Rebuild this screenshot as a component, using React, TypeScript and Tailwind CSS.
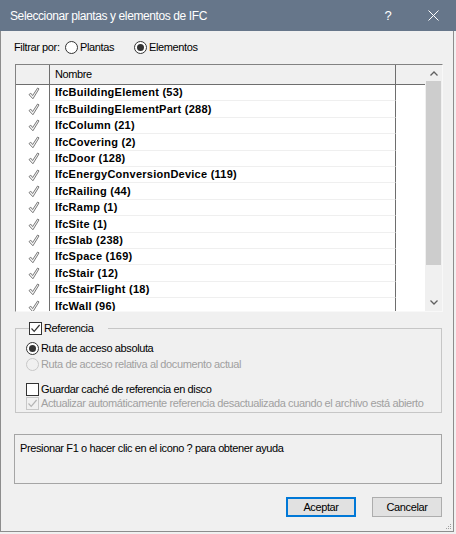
import React from "react"

const items = [
  "IfcBuildingElement (53)",
  "IfcBuildingElementPart (288)",
  "IfcColumn (21)",
  "IfcCovering (2)",
  "IfcDoor (128)",
  "IfcEnergyConversionDevice (119)",
  "IfcRailing (44)",
  "IfcRamp (1)",
  "IfcSite (1)",
  "IfcSlab (238)",
  "IfcSpace (169)",
  "IfcStair (12)",
  "IfcStairFlight (18)",
  "IfcWall (96)",
]

function RowCheck() {
  return (
    <svg width="12" height="13" viewBox="0 0 12 13">
      <path
        d="M1 7.6 L2.8 6.2 L4.6 8.6 L9.6 1 L11 1.9 L4.9 11.8 Z"
        fill="#f4f4f4"
        stroke="#7c7c7c"
        strokeWidth="1"
        strokeLinejoin="round"
      />
    </svg>
  )
}

function Radio({ checked, disabled }: { checked?: boolean; disabled?: boolean }) {
  return (
    <span
      className={
        disabled
          ? "w-[13px] h-[13px] rounded-full border border-[#c8c8c8] bg-[#f0f0f0] flex items-center justify-center shrink-0"
          : "w-[13px] h-[13px] rounded-full border border-[#333333] bg-white flex items-center justify-center shrink-0"
      }
    >
      {checked && <span className="w-[7px] h-[7px] rounded-full bg-[#333333]" />}
    </span>
  )
}

function Checkbox({ checked, disabled }: { checked?: boolean; disabled?: boolean }) {
  return (
    <span
      className={
        disabled
          ? "w-[13px] h-[13px] border border-[#c8c8c8] bg-[#f0f0f0] flex items-center justify-center shrink-0"
          : "w-[13px] h-[13px] border border-[#333333] bg-white flex items-center justify-center shrink-0"
      }
    >
      {checked && (
        <svg width="11" height="11" viewBox="0 0 11 11">
          <path
            d="M1.5 5.5 L4.2 8.3 L9.6 2"
            fill="none"
            stroke={disabled ? "#b4b4b4" : "#333333"}
            strokeWidth="1.2"
          />
        </svg>
      )}
    </span>
  )
}

export default function App() {
  return (
    <div className="w-[456px] h-[534px] bg-[#f0f0f0] flex flex-col overflow-hidden font-['Liberation_Sans',Arial,sans-serif] text-[11px] tracking-[-0.38px] text-black">
      {/* title bar */}
      <div className="h-[31px] shrink-0 bg-[#66768a] flex items-center text-white">
        <span className="flex-1 pl-[10px] text-[12px] tracking-[-0.4px]">Seleccionar plantas y elementos de IFC</span>
        <span className="w-[46px] text-center text-[13px]">?</span>
        <span className="w-[45px] flex items-center justify-center">
          <svg width="11" height="11" viewBox="0 0 11 11">
            <path d="M0.5 0.5 L10.5 10.5 M10.5 0.5 L0.5 10.5" stroke="#ffffff" strokeWidth="1" />
          </svg>
        </span>
      </div>

      {/* body */}
      <div className="relative flex-1 mr-[2px] mb-[2px] border-l border-r border-b border-[#8d8d8d] flex flex-col pl-[13px] pr-[11px]">
        {/* filter row */}
        <div className="mt-[8px] h-[16px] flex items-center">
          <span className="w-[51px]">Filtrar por:</span>
          <Radio />
          <span className="ml-[2px] w-[54px]">Plantas</span>
          <Radio checked />
          <span className="ml-[2px]">Elementos</span>
        </div>

        {/* list view */}
        <div className="mt-[9px] ml-[1px] w-[428px] h-[248px] bg-white border-t border-l border-t-[#828282] border-l-[#828282] border-r border-b border-r-[#f8f8f8] border-b-[#f8f8f8] flex overflow-hidden">
          <div className="flex-1 flex flex-col overflow-hidden">
            <div className="h-[20px] shrink-0 flex bg-[#f0f0f0] border-b border-[#6e6e6e]">
              <div className="w-[34px] border-r border-[#6e6e6e]" />
              <div className="w-[346px] border-r border-[#6e6e6e] pl-[5px] flex items-center">Nombre</div>
              <div className="flex-1" />
            </div>
            {items.map((name) => (
              <div key={name} className="h-[16.4px] shrink-0 flex">
                <div className="w-[34px] border-r border-[#6e6e6e] flex items-center justify-center pl-[3px]">
                  <RowCheck />
                </div>
                <div className="w-[346px] border-r border-r-[#6e6e6e] border-b border-b-[#efefef] pl-[5px] flex items-center font-bold tracking-[0.25px]">
                  {name}
                </div>
                <div className="flex-1" />
              </div>
            ))}
          </div>
          {/* scrollbar */}
          <div className="w-[17px] shrink-0 bg-[#f0f0f0] flex flex-col">
            <div className="h-[16px] flex items-center justify-center">
              <svg width="8" height="5" viewBox="0 0 8 5">
                <path d="M0.5 4.5 L4 1 L7.5 4.5" fill="none" stroke="#606060" strokeWidth="1.3" />
              </svg>
            </div>
            <div className="h-[184px] mx-[1px] bg-[#cdcdcd]" />
            <div className="flex-1" />
            <div className="h-[17px] flex items-center justify-center">
              <svg width="8" height="5" viewBox="0 0 8 5">
                <path d="M0.5 0.5 L4 4 L7.5 0.5" fill="none" stroke="#606060" strokeWidth="1.3" />
              </svg>
            </div>
          </div>
        </div>

        {/* reference group */}
        <fieldset className="mt-[9px] ml-[1px] w-[427px] border border-[#c6c6c6] pl-[10px] pb-[2px]">
          <legend className="ml-[3px] w-[79px] h-[14px] flex items-center">
            <Checkbox checked />
            <span className="ml-[2px]">Referencia</span>
          </legend>
          <div className="mt-[5px] h-[16px] flex items-center">
            <Radio checked />
            <span className="ml-[2px]">Ruta de acceso absoluta</span>
          </div>
          <div className="h-[16px] flex items-center text-[#a0a0a0]">
            <Radio disabled />
            <span className="ml-[2px]">Ruta de acceso relativa al documento actual</span>
          </div>
          <div className="mt-[10px] h-[14px] flex items-center">
            <Checkbox />
            <span className="ml-[2px]">Guardar caché de referencia en disco</span>
          </div>
          <div className="h-[14px] flex items-center text-[#a0a0a0]">
            <Checkbox checked disabled />
            <span className="ml-[2px]">Actualizar automáticamente referencia desactualizada cuando el archivo está abierto</span>
          </div>
        </fieldset>

        {/* help box */}
        <div className="mt-[21px] w-[428px] h-[50px] border border-[#a5a5a5] pl-[5px] pt-[5px]">
          Presionar F1 o hacer clic en el icono ? para obtener ayuda
        </div>

        {/* buttons */}
        <div className="mt-[13px] flex justify-end gap-[16px]">
          <button className="w-[70px] h-[20px] border-2 border-[#0078d7] bg-[#e1e1e1] flex items-center justify-center">
            Aceptar
          </button>
          <button className="w-[70px] h-[20px] border border-[#adadad] bg-[#e1e1e1] flex items-center justify-center">
            Cancelar
          </button>
        </div>

        {/* size grip */}
        <svg className="absolute right-[1px] bottom-[1px]" width="7" height="7" viewBox="0 0 7 7">
          <rect x="5" y="1" width="1" height="1" fill="#a0a0a0" />
          <rect x="3" y="3" width="1" height="1" fill="#a0a0a0" />
          <rect x="5" y="3" width="1" height="1" fill="#a0a0a0" />
          <rect x="1" y="5" width="1" height="1" fill="#a0a0a0" />
          <rect x="3" y="5" width="1" height="1" fill="#a0a0a0" />
          <rect x="5" y="5" width="1" height="1" fill="#a0a0a0" />
        </svg>
      </div>
    </div>
  )
}
